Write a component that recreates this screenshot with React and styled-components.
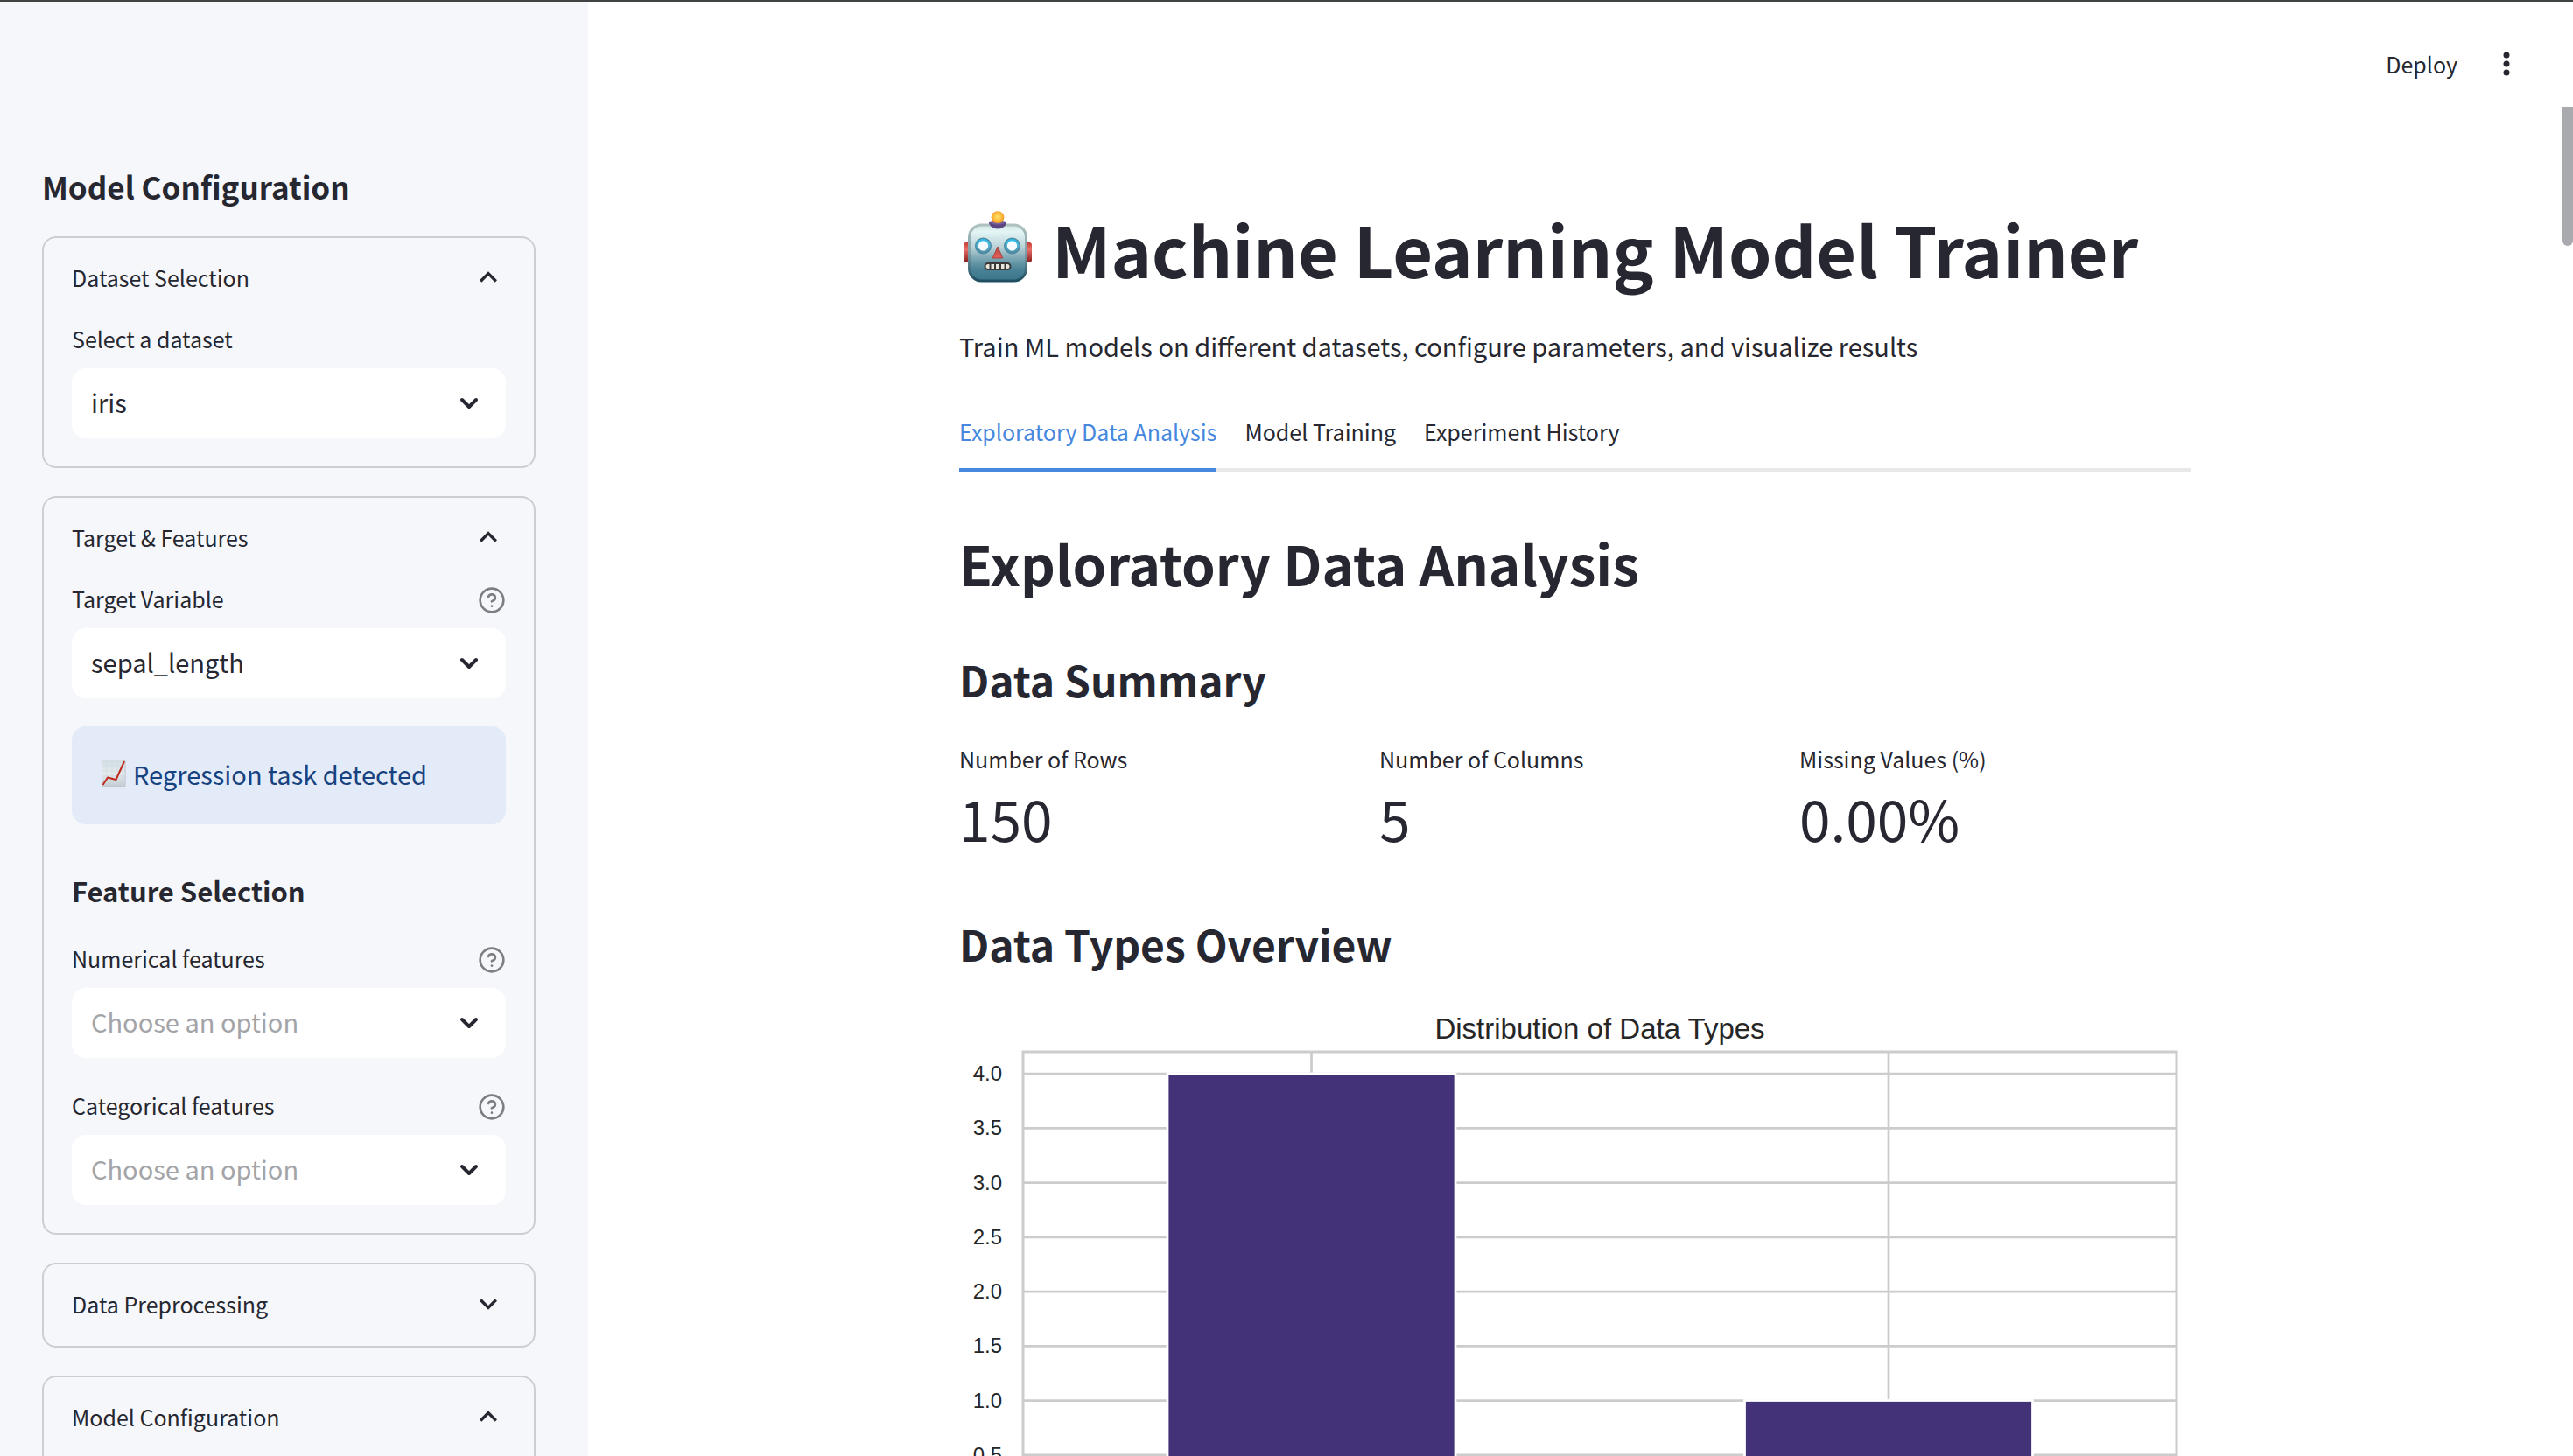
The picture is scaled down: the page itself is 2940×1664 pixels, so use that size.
import React, { useId, useState } from "react";
import styled, { createGlobalStyle } from "styled-components";

const INK = "#262730";
const FONT = '"Noto Sans CJK SC", "Noto Sans", sans-serif';

const GlobalStyle = createGlobalStyle`
  *, *::before, *::after { box-sizing: border-box; }
  body { margin: 0; background: #fff; color: ${INK}; font-family: ${FONT}; }
  h1, h2, h3, p, dl, dd, dt { margin: 0; }
  button, select { font-family: inherit; color: inherit; }
`;

const Shell = styled.div`
  display: flex;
  height: 100vh;
  overflow: hidden;
  border-top: 2px solid #404442;
`;

const Sidebar = styled.aside`
  flex: 0 0 672px;
  padding: 186px 60px 0 48px;
  display: flex;
  flex-direction: column;
  gap: 32px;
  background: #f5f7fb;
`;

const SidebarTitle = styled.h2`
  font-size: 35px;
  line-height: 50px;
  font-weight: 600;
`;

const Panel = styled.section`
  border: 2px solid #cdced2;
  border-radius: 16px;
`;

const PanelHeader = styled.button`
  width: 100%;
  padding: 23px 32px 26px;
  display: flex;
  align-items: center;
  justify-content: space-between;
  border: 0;
  background: none;
  font-size: 25px;
  line-height: 44px;
  text-align: left;
  cursor: pointer;
`;

const PanelBody = styled.div`
  padding: 0 32px 32px;
  display: flex;
  flex-direction: column;
  gap: 32px;
`;

const PanelHeading = styled.h3`
  padding-top: 21px;
  font-size: 31px;
  line-height: 46px;
  font-weight: 600;
`;

const Field = styled.div`
  display: flex;
  flex-direction: column;
  gap: 8px;
`;

const FieldTop = styled.div`
  height: 48px;
  display: flex;
  justify-content: space-between;
`;

const FieldLabel = styled.label`
  font-size: 25px;
  line-height: 44px;
`;

const HelpButton = styled.button`
  padding: 0;
  display: flex;
  align-items: center;
  border: 0;
  background: none;
  cursor: help;
`;

const SelectFrame = styled.div`
  display: grid;
  align-items: center;
  > * { grid-area: 1 / 1; }
`;

const Select = styled.select`
  width: 100%;
  height: 80px;
  padding: 0 72px 4px 22px;
  appearance: none;
  border: 0;
  border-radius: 16px;
  background: #fff;
  color: ${(p) => (p.$empty ? "#a3a4a8" : INK)};
  font-size: 29px;
`;

const SelectArrow = styled.svg`
  justify-self: end;
  margin-right: 22px;
  pointer-events: none;
`;

const Notice = styled.div`
  padding: 30px 32px 34px;
  display: flex;
  align-items: center;
  gap: 6px;
  border-radius: 16px;
  background: #e3eaf8;
  color: #174280;
  font-size: 29px;
  line-height: 48px;
`;

const Main = styled.main`
  flex: 1;
  min-width: 0;
  display: flex;
  flex-direction: column;
`;

const Toolbar = styled.header`
  flex: 0 0 120px;
  padding: 24px 56px 0 0;
  display: flex;
  align-items: center;
  justify-content: flex-end;
  gap: 36px;
`;

const ToolButton = styled.button`
  height: 80px;
  padding: 0 0 2px;
  display: flex;
  align-items: center;
  border: 0;
  background: none;
  font-size: 25px;
  cursor: pointer;
`;

const Viewport = styled.div`
  flex: 1;
  min-height: 0;
  display: flex;
`;

const Scroller = styled.div`
  flex: 1;
  overflow: hidden;
`;

const ScrollTrack = styled.div`
  flex: 0 0 12px;
`;

const ScrollThumb = styled.div`
  height: 159px;
  border-radius: 0 0 6px 6px;
  background: #a9aaae;
`;

const Content = styled.div`
  max-width: 1472px;
  margin: 0 auto;
  padding: 109px 32px 0;
`;

const PageTitle = styled.h1`
  display: flex;
  align-items: center;
  gap: 18px;
  font-size: 79px;
  line-height: 106px;
  font-weight: 700;
`;

const Lead = styled.p`
  margin-top: 32px;
  font-size: 29px;
  line-height: 52px;
`;

const TabList = styled.div`
  margin-top: 32px;
  display: flex;
  gap: 32px;
  border-bottom: 4px solid #e8e8ea;
`;

const Tab = styled.button`
  margin-bottom: -4px;
  padding: 18px 0 20px;
  border: 0;
  border-bottom: 4px solid ${(p) => (p.$active ? "#4688de" : "transparent")};
  background: none;
  color: ${(p) => (p.$active ? "#4688de" : INK)};
  font-size: 25px;
  line-height: 44px;
  cursor: pointer;
`;

const SectionTitle = styled.h2`
  margin-top: 61px;
  font-size: 62px;
  line-height: 86px;
  font-weight: 600;
`;

const SubTitle = styled.h3`
  margin-top: ${(p) => (p.$wide ? 66 : 56)}px;
  font-size: 48px;
  line-height: 68px;
  font-weight: 600;
`;

const Metrics = styled.dl`
  margin-top: 35px;
  display: grid;
  grid-template-columns: repeat(3, 1fr);
  gap: 32px;
`;

const MetricLabel = styled.dt`
  font-size: 25px;
  line-height: 44px;
`;

const MetricValue = styled.dd`
  margin-top: 2px;
  margin-bottom: 1px;
  font-size: 64px;
  line-height: 86px;
`;

const Chart = styled.svg`
  display: block;
  width: 100%;
  margin-top: 32px;
  font-family: "Liberation Sans", Arial, sans-serif;
  fill: #262626;
`;

function Chevron({ up }) {
  return (
    <svg width="40" height="40" viewBox="0 0 24 24" fill={INK} aria-hidden="true">
      {up ? (
        <path d="M12 8l-6 6 1.41 1.41L12 10.83l4.59 4.58L18 14z" />
      ) : (
        <path d="M16.59 8.59L12 13.17 7.41 8.59 6 10l6 6 6-6z" />
      )}
    </svg>
  );
}

function HelpIcon() {
  return (
    <svg width="32" height="32" viewBox="0 0 24 24" fill="none" stroke="#7d7e84" strokeWidth="2" strokeLinecap="round" strokeLinejoin="round">
      <circle cx="12" cy="12" r="10" />
      <path d="M9.09 9a3 3 0 0 1 5.83 1c0 2-3 3-3 3" />
      <path d="M12 17h.01" />
    </svg>
  );
}

function ChartEmoji() {
  return (
    <svg width="32" height="34" viewBox="0 0 32 34" role="img" aria-label="chart increasing">
      <defs>
        <linearGradient id="paper" x1="0" y1="0" x2="0" y2="1">
          <stop offset="0" stopColor="#d3dde2" />
          <stop offset=".5" stopColor="#e4ebee" />
          <stop offset="1" stopColor="#c3ccd2" />
        </linearGradient>
      </defs>
      <rect x="2" y="1" width="27" height="31" fill="url(#paper)" />
      <path d="M2.5 1v30.500h26.500V1" fill="none" stroke="#bcc6cb" />
      <path d="M8 2v29M14 2v29M20 2v29M26 2v29M3 8h26M3 14h26M3 20h26M3 26h26" stroke="#cdd8de" strokeWidth=".6" />
      <path d="M3.500 30L9 21.500l9.500 2.500L28 3" fill="none" stroke="#c0281c" strokeWidth="2" strokeLinejoin="round" />
    </svg>
  );
}

function RobotEmoji() {
  return (
    <svg width="88" height="88" viewBox="0 0 88 88" role="img" aria-label="robot">
      <defs>
        <linearGradient id="face" x1="0" y1="0" x2="0" y2="1">
          <stop offset="0" stopColor="#cfe3e2" />
          <stop offset=".12" stopColor="#e4f5f5" />
          <stop offset=".4" stopColor="#b9d2d7" />
          <stop offset=".65" stopColor="#6d9cab" />
          <stop offset=".8" stopColor="#4a8296" />
          <stop offset="1" stopColor="#39758b" />
        </linearGradient>
        <linearGradient id="rim" x1="0" y1="0" x2="0" y2="1">
          <stop offset="0" stopColor="#afc1bf" />
          <stop offset=".5" stopColor="#7d9fa6" />
          <stop offset="1" stopColor="#1e4e60" />
        </linearGradient>
        <linearGradient id="ear" x1="0" y1="0" x2="0" y2="1">
          <stop offset="0" stopColor="#c63a34" />
          <stop offset=".35" stopColor="#e8706a" />
          <stop offset="1" stopColor="#861d1b" />
        </linearGradient>
        <radialGradient id="bulb" cx=".5" cy=".45" r=".55">
          <stop offset="0" stopColor="#ffe36b" />
          <stop offset=".6" stopColor="#fdbb3a" />
          <stop offset="1" stopColor="#ef8a24" />
        </radialGradient>
        <linearGradient id="nose" x1="0" y1="0" x2="0" y2="1">
          <stop offset="0" stopColor="#b8423c" />
          <stop offset="1" stopColor="#e2605a" />
        </linearGradient>
        <linearGradient id="eye" x1="0" y1="0" x2="0" y2="1">
          <stop offset="0" stopColor="#29c3f0" />
          <stop offset=".5" stopColor="#4fb2d6" />
          <stop offset="1" stopColor="#51849c" />
        </linearGradient>
      </defs>
      <rect x="5" y="37" width="8" height="23" rx="3" fill="url(#ear)" />
      <rect x="75" y="37" width="8" height="23" rx="3" fill="url(#ear)" />
      <rect x="11.500" y="17" width="65" height="64" rx="14" fill="url(#face)" stroke="url(#rim)" strokeWidth="3" />
      <path d="M34 14c4-1.500 16-1.500 20 0 0 4-5 7.500-10 7.500s-10-3.500-10-7.500z" fill="#5b4683" />
      <circle cx="44" cy="8.500" r="7.300" fill="url(#bulb)" />
      <path d="M36.500 14.500c4 1.600 11 1.600 15 0" fill="none" stroke="#78649d" strokeWidth="1.500" />
      <g stroke="#4c8aa2" strokeWidth="1.500">
        <circle cx="27.500" cy="41" r="8.800" fill="url(#eye)" />
        <circle cx="60.500" cy="41" r="8.800" fill="url(#eye)" />
      </g>
      <circle cx="27.500" cy="41" r="5.700" fill="#f6fbff" />
      <circle cx="60.500" cy="41" r="5.700" fill="#f6fbff" />
      <path d="M44 42l5.800 13H38.200z" fill="url(#nose)" stroke="#a9443f" strokeWidth="1" strokeLinejoin="round" />
      <rect x="29.500" y="61" width="29" height="7" rx="3.500" fill="#e8e6dc" stroke="#3c3a38" strokeWidth="2" />
      <path d="M35.500 61.500v6M41 61.500v6M47 61.500v6M52.500 61.500v6" stroke="#3c3a38" strokeWidth="2" />
    </svg>
  );
}

function SelectField({ label, options, placeholder, help }) {
  const id = useId();
  const [value, setValue] = useState(placeholder ? "" : options[0]);
  return (
    <Field>
      <FieldTop>
        <FieldLabel htmlFor={id}>{label}</FieldLabel>
        {help && (
          <HelpButton type="button" aria-label={`Help for ${label}`}>
            <HelpIcon />
          </HelpButton>
        )}
      </FieldTop>
      <SelectFrame>
        <Select id={id} value={value} $empty={value === ""} onChange={(e) => setValue(e.target.value)}>
          {placeholder && <option value="">{placeholder}</option>}
          {options.map((o) => (
            <option key={o}>{o}</option>
          ))}
        </Select>
        <SelectArrow width="40" height="40" viewBox="0 0 40 40" fill="none" stroke={INK} strokeWidth="4" strokeLinecap="round" strokeLinejoin="round" aria-hidden="true">
          <path d="M12 16l8 8 8-8" />
        </SelectArrow>
      </SelectFrame>
    </Field>
  );
}

function Expander({ title, children }) {
  const [open, setOpen] = useState(Boolean(children));
  return (
    <Panel>
      <PanelHeader type="button" aria-expanded={open} onClick={() => setOpen(!open)}>
        {title}
        <Chevron up={open} />
      </PanelHeader>
      {open && children && <PanelBody>{children}</PanelBody>}
    </Panel>
  );
}

const PLOT = { left: 73, right: 1391, top: 58, zero: 581, unit: 124.5 };
const TICKS = [0.5, 1, 1.5, 2, 2.5, 3, 3.5, 4];
const BARS = [
  { center: 402.5, value: 4 },
  { center: 1062, value: 1 },
];
const BAR_WIDTH = 329;

function TypesChart() {
  const y = (v) => PLOT.zero - v * PLOT.unit;
  return (
    <Chart viewBox="0 0 1408 640" role="img" aria-label="Distribution of Data Types">
      <text x={(PLOT.left + PLOT.right) / 2} y="43" fontSize="33" textAnchor="middle">
        Distribution of Data Types
      </text>
      <g stroke="#cccccc" strokeWidth="2.75">
        {TICKS.map((t) => (
          <line key={t} x1={PLOT.left} x2={PLOT.right} y1={y(t)} y2={y(t)} />
        ))}
        {BARS.map((b) => (
          <line key={b.center} x1={b.center} x2={b.center} y1={PLOT.top} y2={PLOT.zero} />
        ))}
      </g>
      {BARS.map((b) => (
        <rect key={b.center} x={b.center - BAR_WIDTH / 2} y={y(b.value)} width={BAR_WIDTH} height={b.value * PLOT.unit} fill="#443278" stroke="#fff" strokeWidth="2.75" />
      ))}
      <rect x={PLOT.left} y={PLOT.top} width={PLOT.right - PLOT.left} height={PLOT.zero - PLOT.top} fill="none" stroke="#cccccc" strokeWidth="3" />
      {TICKS.map((t) => (
        <text key={t} x="49" y={y(t) + 8} fontSize="24" textAnchor="end">
          {t.toFixed(1)}
        </text>
      ))}
    </Chart>
  );
}

const TABS = ["Exploratory Data Analysis", "Model Training", "Experiment History"];
const METRICS = [
  ["Number of Rows", "150"],
  ["Number of Columns", "5"],
  ["Missing Values (%)", "0.00%"],
];

export default function App() {
  const [tab, setTab] = useState(TABS[0]);
  return (
    <>
      <GlobalStyle />
      <Shell>
        <Sidebar>
          <SidebarTitle>Model Configuration</SidebarTitle>
          <Expander title="Dataset Selection">
            <SelectField label="Select a dataset" options={["iris"]} />
          </Expander>
          <Expander title="Target &amp; Features">
            <SelectField label="Target Variable" options={["sepal_length"]} help />
            <Notice role="status">
              <ChartEmoji />
              Regression task detected
            </Notice>
            <PanelHeading>Feature Selection</PanelHeading>
            <SelectField label="Numerical features" options={[]} placeholder="Choose an option" help />
            <SelectField label="Categorical features" options={[]} placeholder="Choose an option" help />
          </Expander>
          <Expander title="Data Preprocessing" />
          <Expander title="Model Configuration">
            <div />
          </Expander>
        </Sidebar>
        <Main>
          <Toolbar>
            <ToolButton type="button">Deploy</ToolButton>
            <ToolButton type="button" aria-label="Main menu">
              <svg width="40" height="40" viewBox="0 0 40 40" fill={INK} aria-hidden="true">
                <circle cx="20" cy="10" r="3.500" />
                <circle cx="20" cy="20" r="3.500" />
                <circle cx="20" cy="30" r="3.500" />
              </svg>
            </ToolButton>
          </Toolbar>
          <Viewport>
            <Scroller>
              <Content>
                <PageTitle>
                  <RobotEmoji />
                  Machine Learning Model Trainer
                </PageTitle>
                <Lead>Train ML models on different datasets, configure parameters, and visualize results</Lead>
                <TabList role="tablist">
                  {TABS.map((t) => (
                    <Tab key={t} type="button" role="tab" aria-selected={t === tab} $active={t === tab} onClick={() => setTab(t)}>
                      {t}
                    </Tab>
                  ))}
                </TabList>
                <SectionTitle>Exploratory Data Analysis</SectionTitle>
                <SubTitle>Data Summary</SubTitle>
                <Metrics>
                  {METRICS.map(([label, value]) => (
                    <div key={label}>
                      <MetricLabel>{label}</MetricLabel>
                      <MetricValue>{value}</MetricValue>
                    </div>
                  ))}
                </Metrics>
                <SubTitle $wide>Data Types Overview</SubTitle>
                <TypesChart />
              </Content>
            </Scroller>
            <ScrollTrack>
              <ScrollThumb />
            </ScrollTrack>
          </Viewport>
        </Main>
      </Shell>
    </>
  );
}
